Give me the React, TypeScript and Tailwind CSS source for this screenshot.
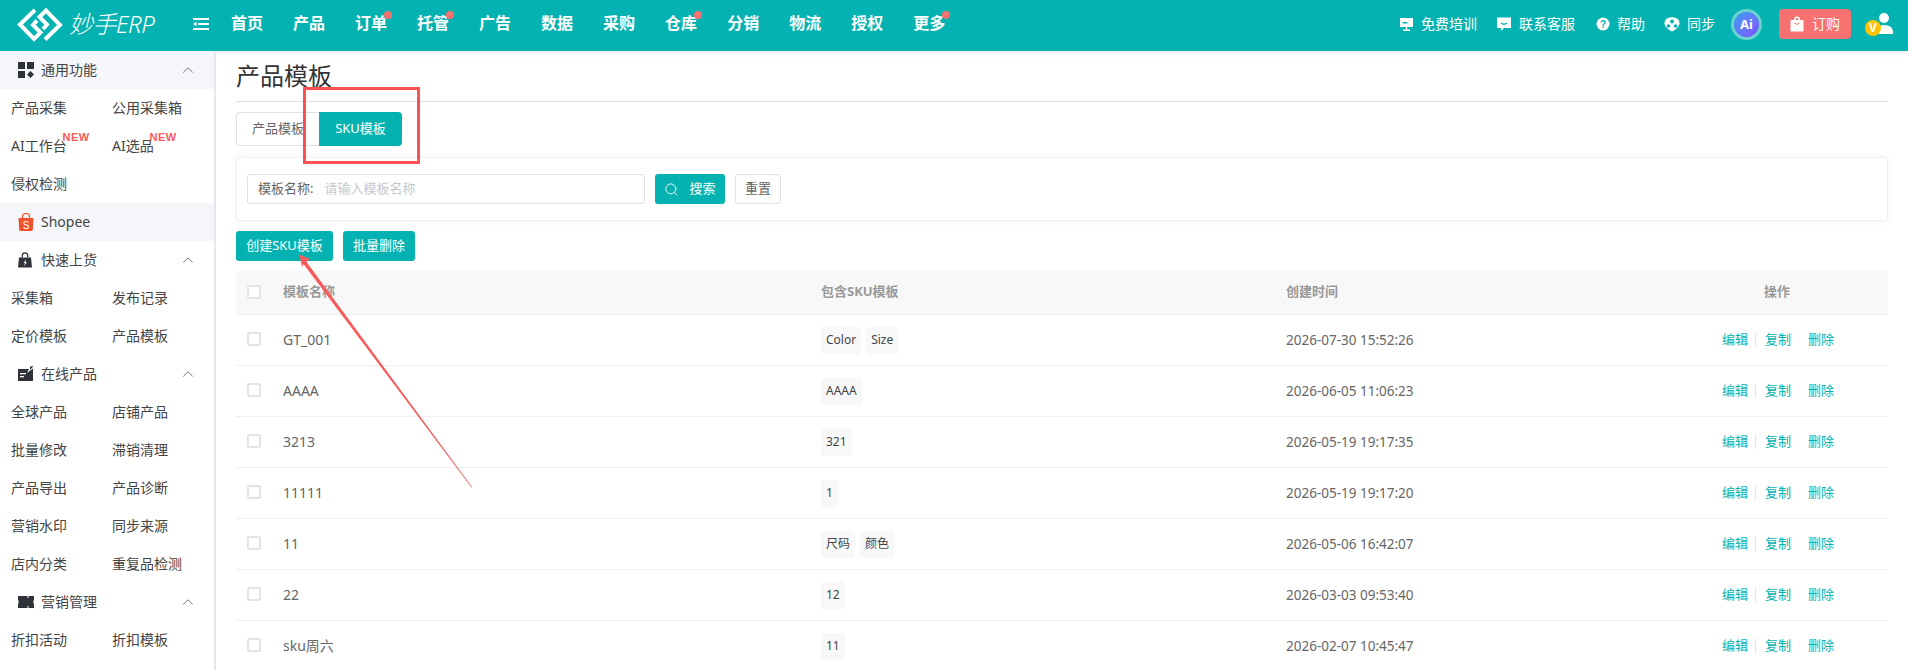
import { ChevronUp, Search } from "lucide-react";
import type { ReactNode } from "react";

const navItems = [
  { label: "首页" },
  { label: "产品" },
  { label: "订单", dot: true },
  { label: "托管", dot: true },
  { label: "广告" },
  { label: "数据" },
  { label: "采购" },
  { label: "仓库", dot: true },
  { label: "分销" },
  { label: "物流" },
  { label: "授权" },
  { label: "更多", dot: true },
];

const rows = [
  { name: "GT_001", tags: ["Color", "Size"], time: "2026-07-30 15:52:26" },
  { name: "AAAA", tags: ["AAAA"], time: "2026-06-05 11:06:23" },
  { name: "3213", tags: ["321"], time: "2026-05-19 19:17:35" },
  { name: "11111", tags: ["1"], time: "2026-05-19 19:17:20" },
  { name: "11", tags: ["尺码", "颜色"], time: "2026-05-06 16:42:07" },
  { name: "22", tags: ["12"], time: "2026-03-03 09:53:40" },
  { name: "sku周六", tags: ["11"], time: "2026-02-07 10:45:47" },
];

const Logo = () => (
  <svg width="48" height="48" viewBox="0 0 48 48" fill="none" stroke="#fff" strokeWidth="4">
    <path d="M19 10 L4 24.5 L18 39 L24.5 32.5 L17 25 L21 20.5" />
    <path d="M29 39.5 L44 25 L30 10.5 L23.5 17 L31 24.5 L27 29" />
  </svg>
);

const MenuIcon = () => (
  <svg width="16" height="14" viewBox="0 0 16 14" fill="#fff">
    <rect x="0" y="1" width="16" height="2" />
    <rect x="5" y="6" width="11" height="2" />
    <path d="M0 7 L3.5 4.5 V9.5 Z" />
    <rect x="0" y="11" width="16" height="2" />
  </svg>
);

const TrainIcon = () => (
  <svg width="15" height="15" viewBox="0 0 15 15" fill="#fff">
    <path d="M1 1 H14 V10 H8.2 V12.5 H11 V14 H4 V12.5 H6.8 V10 H1 Z" />
    <rect x="3.5" y="5" width="5" height="1.5" fill="#04b3b1" />
  </svg>
);

const ChatIcon = () => (
  <svg width="16" height="16" viewBox="0 0 16 16" fill="#fff">
    <path d="M1 1.5 H15 V12 H8 L5 15 V12 H1 Z" />
    <path d="M5 7 Q8 9.5 11 7" fill="none" stroke="#04b3b1" strokeWidth="1.3" />
  </svg>
);

const HelpIcon = () => (
  <svg width="14" height="14" viewBox="0 0 14 14">
    <circle cx="7" cy="7" r="6.5" fill="#fff" />
    <text x="7" y="10.5" textAnchor="middle" fontSize="10" fontWeight="700" fill="#04b3b1" fontFamily="Liberation Sans">
      ?
    </text>
  </svg>
);

const SyncIcon = () => (
  <svg width="16" height="15" viewBox="0 0 16 15" fill="#fff">
    <path d="M4 1 Q8 -0.5 12 1 Q16 3 15.5 7 Q14 12 8 14.5 Q2 12 0.5 7 Q0 3 4 1 Z" />
    <circle cx="8" cy="4.5" r="2" fill="#04b3b1" />
    <circle cx="4.5" cy="9" r="1.8" fill="#04b3b1" />
    <circle cx="11.5" cy="9" r="1.8" fill="#04b3b1" />
  </svg>
);

const AiBadge = () => (
  <div className="relative flex h-[31px] w-[31px] items-center justify-center rounded-full border-[3px] border-[#6fd0d0]">
    <div className="flex h-[25px] w-[25px] items-center justify-center rounded-full bg-gradient-to-br from-[#2a9df4] to-[#7c4dff] text-[13px] leading-none font-bold text-white">
      Ai
    </div>
  </div>
);

const BagIcon = () => (
  <svg width="14" height="16" viewBox="0 0 14 16" fill="#fff">
    <path d="M4 4 V3.5 A3 3 0 0 1 10 3.5 V4 H13.5 V15 Q13.5 15.5 13 15.5 H1 Q0.5 15.5 0.5 15 V4 Z M5.5 4 H8.5 V3.5 A1.5 1.5 0 0 0 5.5 3.5 Z" />
    <path d="M4.5 7 Q7 10 9.5 7" fill="none" stroke="#f87171" strokeWidth="1" />
  </svg>
);

const UserBadge = () => (
  <div className="relative h-[30px] w-[28px]">
    <svg width="20" height="24" viewBox="0 0 20 24" fill="#fff" className="absolute top-[3px] right-0">
      <circle cx="11" cy="6" r="5" />
      <path d="M3 22 Q3 13 11 13 Q19 13 20 19 V22 Z" />
    </svg>
    <div className="absolute top-[11px] left-0 flex h-[16px] w-[16px] items-center justify-center rounded-full bg-[#fcc203] text-[12px] leading-none font-bold text-white">
      V
    </div>
  </div>
);

const GridIcon = () => (
  <svg width="16" height="16" viewBox="0 0 16 16" fill="#2f3238">
    <rect x="0" y="0" width="7" height="7" />
    <rect x="9" y="0" width="7" height="7" />
    <rect x="0" y="9" width="7" height="7" />
    <path d="M12.5 9 L16 12.5 L12.5 16 L9 12.5 Z" />
  </svg>
);

const ShopeeIcon = () => (
  <svg width="16" height="18" viewBox="0 0 16 18">
    <path d="M0.5 5 H15.5 L14.8 16.5 Q14.7 18 13.3 18 H2.7 Q1.3 18 1.2 16.5 Z" fill="#f1512a" />
    <path d="M4.5 5 V4 A3.5 3.5 0 0 1 11.5 4 V5" fill="none" stroke="#f1512a" strokeWidth="1.2" />
    <text x="8" y="15.5" textAnchor="middle" fontSize="10" fill="#fff" fontFamily="Liberation Sans">
      S
    </text>
  </svg>
);

const LockBagIcon = () => (
  <svg width="14" height="16" viewBox="0 0 14 16">
    <path d="M1 5.5 H13 L14 15.5 H0 Z" fill="#2f3238" />
    <path d="M4.3 5.5 V3.5 A2.7 2.7 0 0 1 9.7 3.5 V5.5" fill="none" stroke="#2f3238" strokeWidth="1.3" />
    <path d="M8 7.5 L5.5 11 H7 L6 14 L9 10.2 H7.4 Z" fill="#fff" />
  </svg>
);

const ClapIcon = () => (
  <svg width="16" height="16" viewBox="0 0 16 16" fill="#2f3238">
    <path d="M0 3 H11 L9 7 L15 2.5 V15 H0 Z" />
    <rect x="2" y="7" width="6" height="1.3" fill="#fff" />
    <rect x="2" y="10" width="4" height="1.3" fill="#fff" />
    <path d="M12 0.5 L15.5 0 L12 4 Z" />
  </svg>
);

const TicketIcon = () => (
  <svg width="16" height="12" viewBox="0 0 16 12" fill="#2f3238">
    <path d="M0 0 H9.5 V2 H10.5 V0 H16 V3.5 Q14.5 6 16 8.5 V12 H10.5 V10 H9.5 V12 H0 V8.5 Q1.5 6 0 3.5 Z" />
  </svg>
);

const SectionTitle = ({ icon, label, arrow = true, shaded = false }: { icon: ReactNode; label: string; arrow?: boolean; shaded?: boolean }) => (
  <div className={`flex h-[38px] items-center pr-[17px] pl-[18px] text-[14px] text-[#444] ${shaded ? "bg-[#f5f6fa]" : ""}`}>
    <span className="flex w-[23px] shrink-0 items-center">{icon}</span>
    <span className="flex-1 pb-[2px]">{label}</span>
    {arrow && <ChevronUp size={18} strokeWidth={1.2} className="text-[#666]" />}
  </div>
);

const SideItems = ({ items }: { items: { label: string; isNew?: boolean }[] }) => (
  <div className="grid grid-cols-[101px_1fr] pl-[11px] text-[14px] text-[#444]">
    {items.map((item) => (
      <div key={item.label} className="flex h-[38px] items-center pb-[2px]">
        <span className="relative">
          {item.label}
          {item.isNew && (
            <span className="absolute -top-[3px] -right-[23px] font-['Liberation_Sans',sans-serif] text-[11px] leading-none font-bold tracking-[0.5px] text-[#fa5a5a]">
              NEW
            </span>
          )}
        </span>
      </div>
    ))}
  </div>
);

const Sidebar = () => (
  <aside className="h-full w-[216px] shrink-0 overflow-hidden border-r-2 border-[#e6e6ee] bg-white">
    <SectionTitle icon={<GridIcon />} label="通用功能" shaded />
    <SideItems
      items={[
        { label: "产品采集" },
        { label: "公用采集箱" },
        { label: "AI工作台", isNew: true },
        { label: "AI选品", isNew: true },
        { label: "侵权检测" },
      ]}
    />
    <SectionTitle icon={<ShopeeIcon />} label="Shopee" arrow={false} shaded />
    <SectionTitle icon={<LockBagIcon />} label="快速上货" />
    <SideItems items={[{ label: "采集箱" }, { label: "发布记录" }, { label: "定价模板" }, { label: "产品模板" }]} />
    <SectionTitle icon={<ClapIcon />} label="在线产品" />
    <SideItems
      items={[
        { label: "全球产品" },
        { label: "店铺产品" },
        { label: "批量修改" },
        { label: "滞销清理" },
        { label: "产品导出" },
        { label: "产品诊断" },
        { label: "营销水印" },
        { label: "同步来源" },
        { label: "店内分类" },
        { label: "重复品检测" },
      ]}
    />
    <SectionTitle icon={<TicketIcon />} label="营销管理" />
    <SideItems items={[{ label: "折扣活动" }, { label: "折扣模板" }]} />
  </aside>
);

const Header = () => (
  <header className="flex h-[51px] shrink-0 items-center bg-[#04b3b1] pr-[15px] pb-[3px] pl-[16px] text-white shadow-[0_2px_6px_rgba(0,0,0,0.08)]">
    <Logo />
    <span className="ml-[5px] w-[124px] text-[24px] leading-none font-light tracking-[-0.5px] italic">妙手ERP</span>
    <MenuIcon />
    <nav className="ml-[22px] flex gap-[30px] pb-[2px] text-[16px] font-bold">
      {navItems.map((item) => (
        <span key={item.label} className="relative">
          {item.label}
          {item.dot && <span className="absolute top-0 -right-[5px] h-[8px] w-[8px] rounded-full bg-[#f87171]" />}
        </span>
      ))}
    </nav>
    <div className="ml-auto flex items-center text-[14px]">
      <span className="flex items-center gap-[7px]">
        <TrainIcon />
        <span className="pb-[2px]">免费培训</span>
      </span>
      <span className="ml-[19px] flex items-center gap-[7px]">
        <ChatIcon />
        <span className="pb-[2px]">联系客服</span>
      </span>
      <span className="ml-[21px] flex items-center gap-[7px]">
        <HelpIcon />
        <span className="pb-[2px]">帮助</span>
      </span>
      <span className="ml-[19px] flex items-center gap-[7px]">
        <SyncIcon />
        <span className="pb-[2px]">同步</span>
      </span>
      <span className="ml-[16px]">
        <AiBadge />
      </span>
      <button className="ml-[17px] flex h-[30px] w-[72px] items-center justify-center gap-[8px] rounded-[4px] bg-[#f87171] pb-[1px] text-[14px]">
        <BagIcon />
        订购
      </button>
      <span className="ml-[14px]">
        <UserBadge />
      </span>
    </div>
  </header>
);

const Checkbox = () => <span className="block h-[14px] w-[14px] rounded-[2px] border-2 border-[#e3e3e8] bg-white" />;

const Content = () => (
  <main className="min-w-0 flex-1 pr-[20px] pl-[20px]">
    <div className="flex h-[51px] items-center border-b border-[#dfdfe8]">
      <h1 className="text-[24px] leading-none font-normal text-[#333]">产品模板</h1>
    </div>
    <div className="mt-[10px] flex h-[34px]">
      <div className="flex w-[83px] items-center rounded-l-[4px] border border-r-0 border-[#dfdfe8] pl-[15px] text-[13px] text-[#666]">产品模板</div>
      <div className="flex w-[83px] items-center justify-center rounded-r-[4px] bg-[#04b3b1] text-[13px] text-white">SKU模板</div>
    </div>
    <div className="mt-[11px] flex h-[64px] items-center gap-[10px] rounded-[2px] border border-[#f0f0f4] pl-[10px] shadow-[0_0_6px_rgba(0,0,0,0.06)]">
      <div className="flex h-[30px] w-[398px] items-center rounded-[3px] border border-[#dfdfe8] pl-[10px] text-[13px]">
        <span className="text-[#666]">模板名称:</span>
        <span className="ml-[11px] text-[#c6c8d0]">请输入模板名称</span>
      </div>
      <button className="flex h-[30px] w-[70px] items-center justify-center gap-[10px] rounded-[3px] bg-[#04b3b1] text-[13px] text-white">
        <Search size={15} strokeWidth={1.4} />
        搜索
      </button>
      <button className="h-[30px] w-[46px] rounded-[3px] border border-[#dfdfe8] text-[13px] text-[#666]">重置</button>
    </div>
    <div className="mt-[10px] flex gap-[10px]">
      <button className="h-[30px] w-[97px] rounded-[3px] bg-[#04b3b1] text-[13px] text-white">创建SKU模板</button>
      <button className="h-[30px] w-[72px] rounded-[3px] bg-[#04b3b1] text-[13px] text-white">批量删除</button>
    </div>
    <div className="mt-[10px] text-[13px]">
      <div className="flex h-[44px] items-center border-b border-[#eeeef5] bg-[#f8f8f8] pb-[2px] font-bold text-[#999]">
        <span className="w-[47px] pl-[11px]">
          <Checkbox />
        </span>
        <span className="w-[538px]">模板名称</span>
        <span className="w-[465px]">包含SKU模板</span>
        <span className="flex-1">创建时间</span>
        <span className="w-[222px] pl-[98px] text-left">操作</span>
      </div>
      {rows.map((row) => (
        <div key={row.name} className="flex h-[51px] items-center border-b border-[#eeeef5] text-[#666]">
          <span className="w-[47px] pb-[2px] pl-[11px]">
            <Checkbox />
          </span>
          <span className="w-[538px] pb-[2px] text-[14px]">{row.name}</span>
          <span className="flex w-[465px] gap-[5px]">
            {row.tags.map((tag) => (
              <span key={tag} className="flex h-[27px] items-center rounded-[3px] bg-[#f8f8f8] px-[5px] text-[12px] text-[#444]">
                {tag}
              </span>
            ))}
          </span>
          <span className="flex-1 text-[13.5px]">{row.time}</span>
          <span className="flex w-[222px] items-center pl-[56px] text-[#04b3b1]">
            <span>编辑</span>
            <span className="mr-[9px] ml-[7px] h-[14px] w-px bg-[#e3e3e8]" />
            <span>复制</span>
            <span className="ml-[17px]">删除</span>
          </span>
        </div>
      ))}
    </div>
  </main>
);

export default function App() {
  return (
    <div className="relative flex h-[670px] w-[1908px] flex-col overflow-hidden bg-white font-['Noto_Sans','Noto_Sans_CJK_SC',sans-serif]">
      <Header />
      <div className="flex min-h-0 flex-1">
        <Sidebar />
        <Content />
      </div>
      {/* annotation over the screenshot */}
      <div className="absolute top-[87px] left-[303px] h-[77px] w-[117px] border-[3px] border-[#fa5252]" />
      <svg className="absolute top-0 left-0" width="1908" height="670" fill="#f95a5a">
        <path d="M299.5 254.5 L310 259 L306.5 262 L472 487 L471.5 487.5 L303.5 264 L302 267 Z" />
      </svg>
    </div>
  );
}
